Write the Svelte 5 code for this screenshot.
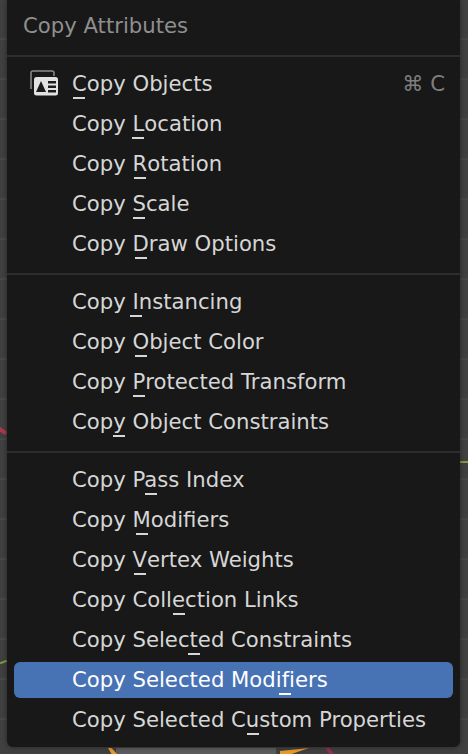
<script>
	// key: index of the underlined access key in each label
	const sections = [
		[
			{ label: 'Copy Objects', key: 0, icon: true, shortcut: '⌘ C' },
			{ label: 'Copy Location', key: 5 },
			{ label: 'Copy Rotation', key: 5 },
			{ label: 'Copy Scale', key: 5 },
			{ label: 'Copy Draw Options', key: 5 }
		],
		[
			{ label: 'Copy Instancing', key: 5 },
			{ label: 'Copy Object Color', key: 5 },
			{ label: 'Copy Protected Transform', key: 5 },
			{ label: 'Copy Object Constraints', key: 3 }
		],
		[
			{ label: 'Copy Pass Index', key: 6 },
			{ label: 'Copy Modifiers', key: 5 },
			{ label: 'Copy Vertex Weights', key: 5 },
			{ label: 'Copy Collection Links', key: 9 },
			{ label: 'Copy Selected Constraints', key: 10 },
			{ label: 'Copy Selected Modifiers', key: 18, active: true },
			{ label: 'Copy Selected Custom Properties', key: 15 }
		]
	];
</script>

<div class="viewport">
	<span class="mark floor"></span>
	<span class="mark red-left"></span>
	<span class="mark green-left"></span>
	<span class="mark green-right"></span>
	<span class="mark orange-a"></span>
	<span class="mark orange-b"></span>
	<span class="mark red-bottom"></span>

	<div class="menu">
		<div class="title">Copy Attributes</div>
		{#each sections as section}
			<div class="sep"></div>
			<div class="section">
				{#each section as item}
					<div class="row" class:active={item.active}>
						<span class="icon">
							{#if item.icon}
								<svg width="30" height="28" viewBox="0 0 30 28">
									<path d="M1 20V4a2 2 0 0 1 2-2h19a2 2 0 0 1 2 2v3" fill="none" stroke="#8c8c8c" stroke-width="1.5" />
									<rect x="4" y="8" width="24" height="18.500" rx="2.5" fill="#e2e2e2" />
									<path d="M6 23 11 12l5 11z" fill="#1b1b1b" />
									<path d="M18 12h8v2.500h-8zM18 16.500h8V19h-8zM18 21h8v2.500h-8z" fill="#1b1b1b" />
								</svg>
							{/if}
						</span>
						<span class="label">{item.label.slice(0, item.key)}<span class="key">{item.label[item.key]}</span>{item.label.slice(item.key + 1)}</span>
						{#if item.shortcut}
							<span class="shortcut">{item.shortcut}</span>
						{/if}
					</div>
				{/each}
			</div>
		{/each}
	</div>
</div>

<style>
	:global(body) {
		margin: 0;
		background: #3f3f3f;
	}

	.viewport {
		position: relative;
		width: 468px;
		height: 754px;
		overflow: hidden;
		padding: 0 8px 7px 7px;
		box-sizing: border-box;
		background: repeating-linear-gradient(180deg, #404040 0 38px, #494949 38px 40px);
		font-family: 'DejaVu Sans', sans-serif;
	}

	.mark {
		position: absolute;
		display: block;
	}

	.floor {
		left: 116px;
		top: 748px;
		width: 160px;
		height: 6px;
		background: #5c5c5c;
	}

	.red-left {
		left: -2px;
		top: 429px;
		width: 9px;
		height: 4px;
		background: #a83a4c;
		transform: rotate(35deg);
	}

	.green-left {
		left: 0;
		top: 661px;
		width: 7px;
		height: 2px;
		background: #7d9c3f;
		transform: rotate(-20deg);
	}

	.green-right {
		left: 460px;
		top: 461px;
		width: 8px;
		height: 2px;
		background: #7d9c3f;
	}

	.orange-a {
		left: 108px;
		top: 748px;
		width: 9px;
		height: 6px;
		background: #e8992c;
		clip-path: polygon(0 0, 40% 0, 100% 100%, 40% 100%);
	}

	.orange-b {
		left: 280px;
		top: 748px;
		width: 29px;
		height: 6px;
		background: #e8992c;
		clip-path: polygon(100% 0, 40% 100%, 0 100%, 0 50%);
	}

	.red-bottom {
		left: 325px;
		top: 748px;
		width: 9px;
		height: 6px;
		background: #93304a;
		clip-path: polygon(0 0, 50% 0, 100% 100%, 50% 100%);
	}

	.menu {
		position: relative;
		height: 747px;
		background: #181818;
		border-radius: 0 0 6px 6px;
		box-shadow: 0 0 5px rgba(0, 0, 0, 0.45);
	}

	.title {
		height: 55px;
		box-sizing: border-box;
		padding: 13px 0 0 16px;
		font-size: 21.2px;
		line-height: 26px;
		color: #8f8f8f;
	}

	.sep {
		height: 2px;
		background: #2d2d2d;
	}

	.section {
		display: flex;
		flex-direction: column;
		gap: 4px;
		padding: 9px 7px 11px;
	}

	.row {
		display: flex;
		align-items: center;
		height: 36px;
		padding-bottom: 2px;
		box-sizing: border-box;
		border-radius: 6px;
		font-size: 21.2px;
		color: #d6d6d6;
	}

	.row.active {
		background: #4772b3;
		color: #fff;
	}

	.icon {
		display: flex;
		width: 58px;
		padding-left: 16px;
		box-sizing: border-box;
		flex: none;
	}

	.label {
		white-space: pre;
		flex: 1;
	}

	.key {
		position: relative;
	}

	.key::after {
		content: '';
		position: absolute;
		left: 50%;
		bottom: -3px;
		width: 12px;
		height: 2px;
		margin-left: -6px;
		background: currentColor;
	}

	.shortcut {
		padding-right: 8px;
		color: #7f7f7f;
	}
</style>
